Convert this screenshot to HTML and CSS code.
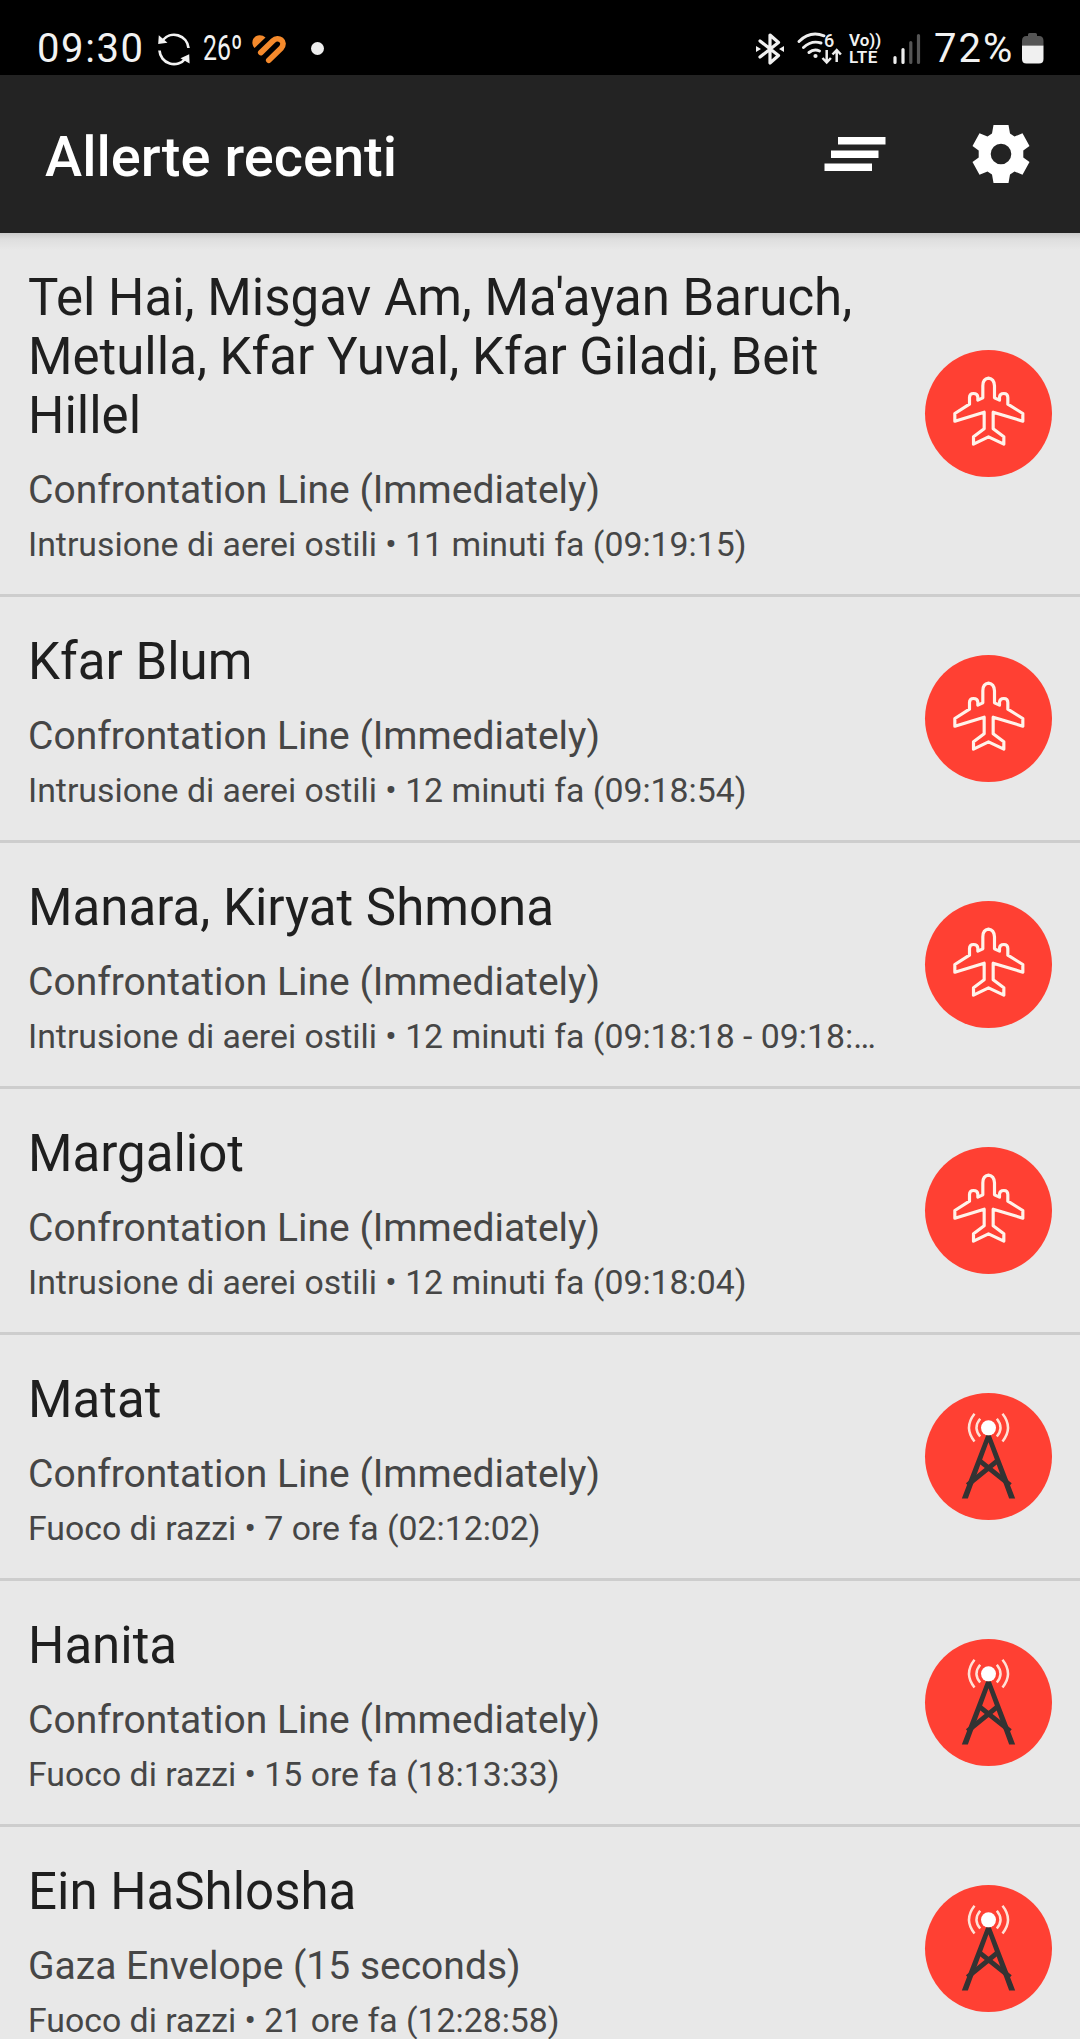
FILE: index.html
```html
<!DOCTYPE html>
<html lang="it">
<head>
<meta charset="utf-8">
<title>Allerte recenti</title>
<link rel="stylesheet" href="styles.css">
</head>
<body>
<svg class="defs" width="0" height="0">
  <symbol id="plane" viewBox="0 0 381 381">
    <path transform="translate(-44.5 -29.5)" d="M235 114Q218 116 218 137V173L203 180V171Q202 160 190 160Q178 160 178 172V192L134 220V243L222 216V266L190 290V312L235 290L281 312V290L249 266V216L338 243V220L293 192V172Q293 160 281 160Q269 160 268 171V180L253 173V137Q252 116 235 114Z" fill="none" stroke="#fff3ea" stroke-width="9.5" stroke-linejoin="round"/>
  </symbol>
  <symbol id="tower" viewBox="0 0 381 381">
    <g transform="translate(-44.5 -38.5)" fill="none">
      <path d="M235 186L173 355H155L228 165H242L315 355H297Z" fill="#333"/>
      <path d="M205 239L300 315M265 239L172 315" stroke="#333" stroke-width="15"/>
      <path d="M210 116Q188 143 210 169M193 101Q160 143 193 184M260 116Q282 143 260 169M277 101Q310 143 277 184" stroke="#ffe1d6" stroke-width="7.5"/>
      <circle cx="235" cy="143" r="22.5" fill="#fff"/>
    </g>
  </symbol>
</svg>

<div class="status">
  <div class="status-left">
    <span class="clock">09:30</span>
    <svg class="sync" viewBox="0 0 34 34" width="34" height="34">
      <path d="M5.5 8.5A14.5 14.5 0 0 1 31.5 16M2.5 18.5A14.5 14.5 0 0 0 28.5 26.5" fill="none" stroke="#f2f2f2" stroke-width="2.7"/>
      <path d="M1.8 3.2L1.2 12L10.5 10.8ZM32.2 22.2L32.6 31.6L23.5 26.2Z" fill="#f2f2f2"/>
    </svg>
    <span class="temp">26º</span>
    <svg class="heart" viewBox="0 0 34 30" width="34" height="30">
      <path d="M2.500 14C-2 8.500 1 1.500 7.500 1.200Q11 1.100 13.500 3.500Z" fill="#f58a2c"/>
      <path d="M8.800 18.600L21 6.700C26.500 1.500 34.500 7.500 29.300 14L16.800 26.300" fill="none" stroke="#f58a2c" stroke-width="5.700" stroke-linecap="round"/>
    </svg>
    <span class="dot"></span>
  </div>
  <div class="status-right">
    <svg class="bt" viewBox="0 0 28 32" width="28" height="32">
      <path d="M4 8L22.500 22.500L14 30V2L22.500 9.500L4 24" fill="none" stroke="#f0f0f0" stroke-width="3.200" stroke-linejoin="round" stroke-linecap="round"/>
      <path d="M0 13L5 16L0 19ZM28 13L23 16L28 19Z" fill="#f0f0f0"/>
    </svg>
    <svg class="wifi" viewBox="0 -6 46 46" width="46" height="46">
      <path d="M2 9.500Q13 -1.500 27 3.800M6.500 15.500Q14.500 8 24 11M12 20.500Q17 16.500 22.500 19" fill="none" stroke="#eee" stroke-width="2.900" stroke-linecap="round"/>
      <circle cx="18.500" cy="24" r="2.100" fill="#eee"/>
      <text x="27" y="15" class="wifi-num">6</text>
      <path d="M29.700 18V30M25.500 26L29.700 30.500L33.900 26M39.700 30V18.500M35.500 22.500L39.700 18L43.900 22.500" fill="none" stroke="#eee" stroke-width="2.500"/>
    </svg>
    <span class="volte"><span>Vo))</span><span class="lte">LTE</span></span>
    <svg class="signal" viewBox="0 0 28 32" width="28" height="32">
      <path d="M2 24.500V29.500M10 16.500V29.500" stroke="#eee" stroke-width="3.200" stroke-linecap="round"/>
      <path d="M17.800 9.500V29.500M25.500 2.500V29.500" stroke="#555" stroke-width="3.200" stroke-linecap="round"/>
    </svg>
    <span class="percent">72%</span>
    <svg class="battery" viewBox="0 0 22 31" width="22" height="31">
      <path d="M6 3V1.500Q6 0 7.500 0H13.500Q15 0 15 1.500V3H17Q21.500 3 21.500 8V12.500H0V8Q0 3 4.500 3Z" fill="#555"/>
      <path d="M0 12.500H21.500V26Q21.500 30.500 17 30.500H4.500Q0 30.500 0 26Z" fill="#f0f0f0"/>
    </svg>
  </div>
</div>

<header class="appbar">
  <h1>Allerte recenti</h1>
  <svg class="clear" viewBox="0 0 62 36" width="62" height="36">
    <path d="M14 1H61.500V8.500H14ZM7 14.500H54.500V22H7ZM.5 27.500H48V35H.5Z" fill="#fff"/>
  </svg>
  <svg class="gear" viewBox="-29 -29 58 58" width="58" height="58">
    <path fill="#fff" fill-rule="evenodd" d="M-7.500-29H7.500L9-20.500L13.500-17.500L21.500-20.700L28.500-8L22.300-3.500V3.500L28.500 8L21.500 20.700L13.500 17.500L9 20.500L7.500 29H-7.500L-9 20.500L-13.500 17.500L-21.500 20.700L-28.500 8L-22.300 3.500V-3.500L-28.500-8L-21.500-20.700L-13.500-17.500L-9-20.500ZM0-10.300A10.300 10.300 0 1 0 0 10.300A10.300 10.300 0 1 0 0-10.300Z"/>
  </svg>
</header>

<main class="list">
  <article class="row">
    <div class="text"><h2>Tel Hai, Misgav Am, Ma'ayan Baruch, Metulla, Kfar Yuval, Kfar Giladi, Beit Hillel</h2><p class="zone">Confrontation Line (Immediately)</p><p class="when">Intrusione di aerei ostili • 11 minuti fa (09:19:15)</p></div>
    <svg class="badge"><use href="#plane"/></svg>
  </article>
  <article class="row">
    <div class="text"><h2>Kfar Blum</h2><p class="zone">Confrontation Line (Immediately)</p><p class="when">Intrusione di aerei ostili • 12 minuti fa (09:18:54)</p></div>
    <svg class="badge"><use href="#plane"/></svg>
  </article>
  <article class="row">
    <div class="text"><h2>Manara, Kiryat Shmona</h2><p class="zone">Confrontation Line (Immediately)</p><p class="when">Intrusione di aerei ostili • 12 minuti fa (09:18:18 - 09:18:…</p></div>
    <svg class="badge"><use href="#plane"/></svg>
  </article>
  <article class="row">
    <div class="text"><h2>Margaliot</h2><p class="zone">Confrontation Line (Immediately)</p><p class="when">Intrusione di aerei ostili • 12 minuti fa (09:18:04)</p></div>
    <svg class="badge"><use href="#plane"/></svg>
  </article>
  <article class="row">
    <div class="text"><h2>Matat</h2><p class="zone">Confrontation Line (Immediately)</p><p class="when">Fuoco di razzi • 7 ore fa (02:12:02)</p></div>
    <svg class="badge"><use href="#tower"/></svg>
  </article>
  <article class="row">
    <div class="text"><h2>Hanita</h2><p class="zone">Confrontation Line (Immediately)</p><p class="when">Fuoco di razzi • 15 ore fa (18:13:33)</p></div>
    <svg class="badge"><use href="#tower"/></svg>
  </article>
  <article class="row">
    <div class="text"><h2>Ein HaShlosha</h2><p class="zone">Gaza Envelope (15 seconds)</p><p class="when">Fuoco di razzi • 21 ore fa (12:28:58)</p></div>
    <svg class="badge"><use href="#tower"/></svg>
  </article>
</main>
</body>
</html>
```
FILE: styles.css
```css
* { box-sizing: border-box; margin: 0; padding: 0; }

html, body { height: 2039px; overflow: hidden; }

body {
  width: 1080px;
  display: flex;
  flex-direction: column;
  background: #e8e8e8;
  font-family: Roboto, "Liberation Sans", sans-serif;
}

svg { display: block; flex: none; }
.defs { display: none; }

.status {
  flex: none;
  height: 75px;
  padding: 22px 36px 0 37px;
  display: flex;
  align-items: center;
  justify-content: space-between;
  background: #000;
  color: #f2f2f2;
}
.status-left, .status-right { display: flex; align-items: center; white-space: nowrap; }
.clock { width: 120px; font-size: 40px; line-height: 54px; letter-spacing: 1.6px; }
.temp {
  width: 49px;
  margin-left: 12px;
  font-size: 35px;
  line-height: 52px;
  transform: scaleX(.71);
  transform-origin: left;
}
.dot { width: 13px; height: 13px; margin-left: 25px; border-radius: 50%; background: #eee; }
.wifi { margin-left: 13px; }
.wifi-num { font-family: Roboto, sans-serif; font-size: 18px; font-weight: 500; fill: #eee; }
.volte {
  width: 32px;
  margin-left: 6px;
  display: flex;
  flex-direction: column;
  font-size: 17px;
  font-weight: 600;
  line-height: 17px;
}
.lte { letter-spacing: .5px; }
.signal { margin-left: 12px; }
.percent { width: 84px; margin-left: 13px; font-size: 40px; line-height: 54px; letter-spacing: 2px; }
.battery { margin-left: 4px; }

.appbar {
  flex: none;
  height: 158px;
  padding: 0 50px 0 45px;
  display: flex;
  align-items: center;
  background: #232323;
  color: #fff;
}
.appbar h1 { flex: 1; font-size: 56px; font-weight: 500; line-height: 66px; padding-top: 6px; }
.clear { margin-right: 86px; }

.list {
  flex: 1;
  min-height: 0;
  overflow: hidden;
  background: linear-gradient(#cbcbcb, #dedede 6px, #e8e8e8 17px);
}
.row {
  display: flex;
  align-items: center;
  justify-content: space-between;
  padding: 35px 28px 29px;
  border-bottom: 3px solid #cdcdcd;
}
.text { width: 852px; }
.row h2 { font-size: 51px; font-weight: 400; line-height: 59px; color: #1f1f1f; }
.zone { margin-top: 22px; font-size: 39px; line-height: 46px; color: #464646; }
.when { margin-top: 12px; font-size: 33.800px; line-height: 40px; color: #464646; white-space: nowrap; }
.badge { width: 127px; height: 127px; margin: -38px 0 -32px; border-radius: 50%; background: #ff4033; }
```
